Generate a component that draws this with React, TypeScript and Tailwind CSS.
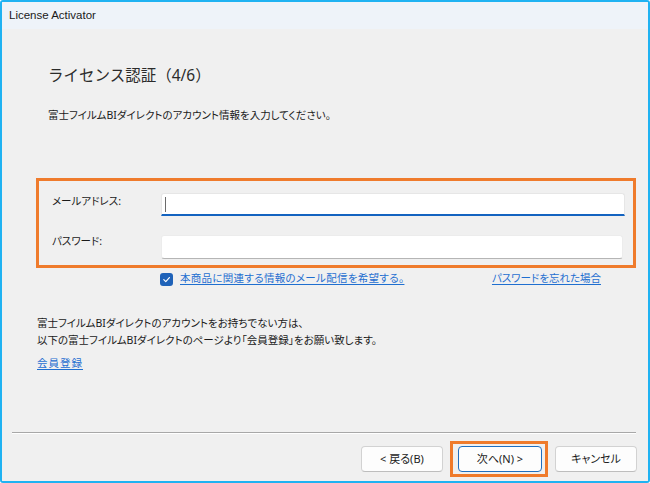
import React from "react";

const jp = "font-['Noto_Sans','Noto_Sans_CJK_JP',sans-serif] [font-feature-settings:'palt']";

const Button = ({ label, focused }: { label: string; focused?: boolean }) => (
  <div
    className={
      "flex items-center justify-center h-[26px] rounded-[4px] bg-[#fdfdfd] text-[11px] text-[#1b1b1b] " +
      (focused ? "w-[84px] border border-[#1f6fc0]" : "w-[82px] border border-[#d2d2d2] border-b-[#bdbdbd]")
    }
  >
    {label}
  </div>
);

export default function App() {
  return (
    <div className={"w-[650px] h-[483px] bg-white " + jp}>
      <div className="w-[650px] h-[483px] flex flex-col border-2 border-[#1fb2f2] rounded-[3px] overflow-hidden">
        {/* title bar */}
        <div className="h-[27px] shrink-0 bg-[#eef3f9] flex items-center pl-[7px] text-[11.5px] text-[#1a1a1a] font-['Liberation_Sans',sans-serif]">
          License Activator
        </div>

        {/* body */}
        <div className="flex-1 bg-[#f0f0f0] flex flex-col">
          <div className="pl-[46px] pt-[36px] text-[15.5px] leading-[20px] text-[#2b2b2b] [font-feature-settings:normal]">
            ライセンス認証（4/6）
          </div>
          <div className="pl-[46px] mt-[23px] text-[10.5px] leading-[14px] text-[#1a1a1a]">
            富士フイルムBIダイレクトのアカウント情報を入力してください。
          </div>

          {/* account box */}
          <div className="ml-[34px] mt-[56px] w-[600px] border-[3px] border-[#ef7b2c] pt-[12px] pb-[6px] pl-[13px] pr-[8px] flex flex-col gap-[19px]">
            <div className="flex items-center h-[23px]">
              <div className="w-[109px] text-[10.5px] text-[#1a1a1a] -mt-[6px]">メールアドレス:</div>
              <div className="flex-1 h-[23px] bg-white border border-[#e6e6e6] border-b-2 border-b-[#1363c0] rounded-t-[3px] flex items-center pl-[3px]">
                <span className="w-px h-[15px] bg-[#6b6b6b]" />
              </div>
            </div>
            <div className="flex items-center h-[24px] pr-[2px]">
              <div className="w-[109px] text-[10.5px] text-[#1a1a1a] -mt-[10px]">パスワード:</div>
              <div className="flex-1 h-[24px] bg-white border border-[#ececec] border-b-[#b5b5b5] rounded-[3px]" />
            </div>
          </div>

          {/* checkbox row */}
          <div className="mt-[4px] h-[14px] flex items-center text-[10.5px]">
            <div className="ml-[158px] w-[13px] h-[13px] rounded-[3px] bg-[#1f62b8] flex items-center justify-center">
              <svg width="9" height="9" viewBox="0 0 10 10">
                <path d="M2 5.2 L4.2 7.3 L8.2 2.8" fill="none" stroke="white" strokeWidth="1.3" strokeLinecap="round" strokeLinejoin="round" />
              </svg>
            </div>
            <span className="ml-[7px] text-[#1f6fd0] underline underline-offset-2 tracking-[0.3px]">
              本商品に関連する情報のメール配信を希望する。
            </span>
            <span className="ml-auto mr-[47px] text-[#1f6fd0] underline underline-offset-2">
              パスワードを忘れた場合
            </span>
          </div>

          {/* registration info */}
          <div className="pl-[35px] mt-[29px] text-[10.5px] leading-[17px] text-[#1a1a1a]">
            <div>富士フイルムBIダイレクトのアカウントをお持ちでない方は、</div>
            <div>以下の富士フイルムBIダイレクトのページより「会員登録」をお願い致します。</div>
            <div className="mt-[6px] text-[#1f6fd0] underline underline-offset-2 tracking-[1px]">会員登録</div>
          </div>

          {/* footer */}
          <div className="mt-auto">
            <div className="ml-[10px] mr-[12px] h-px bg-[#a8a8a8]" />
            <div className="ml-[10px] mr-[12px] h-px bg-white" />
            <div className="mt-[7px] mb-[4px] pr-[11px] flex items-center justify-end gap-[7px]">
              <Button label="< 戻る(B)" />
              <div className="border-[3px] border-[#ef7b2c] pt-[2px] pb-[2px] pl-[5px] pr-[3px]">
                <Button label="次へ(N) >" focused />
              </div>
              <Button label="キャンセル" />
            </div>
          </div>
        </div>
      </div>
    </div>
  );
}
